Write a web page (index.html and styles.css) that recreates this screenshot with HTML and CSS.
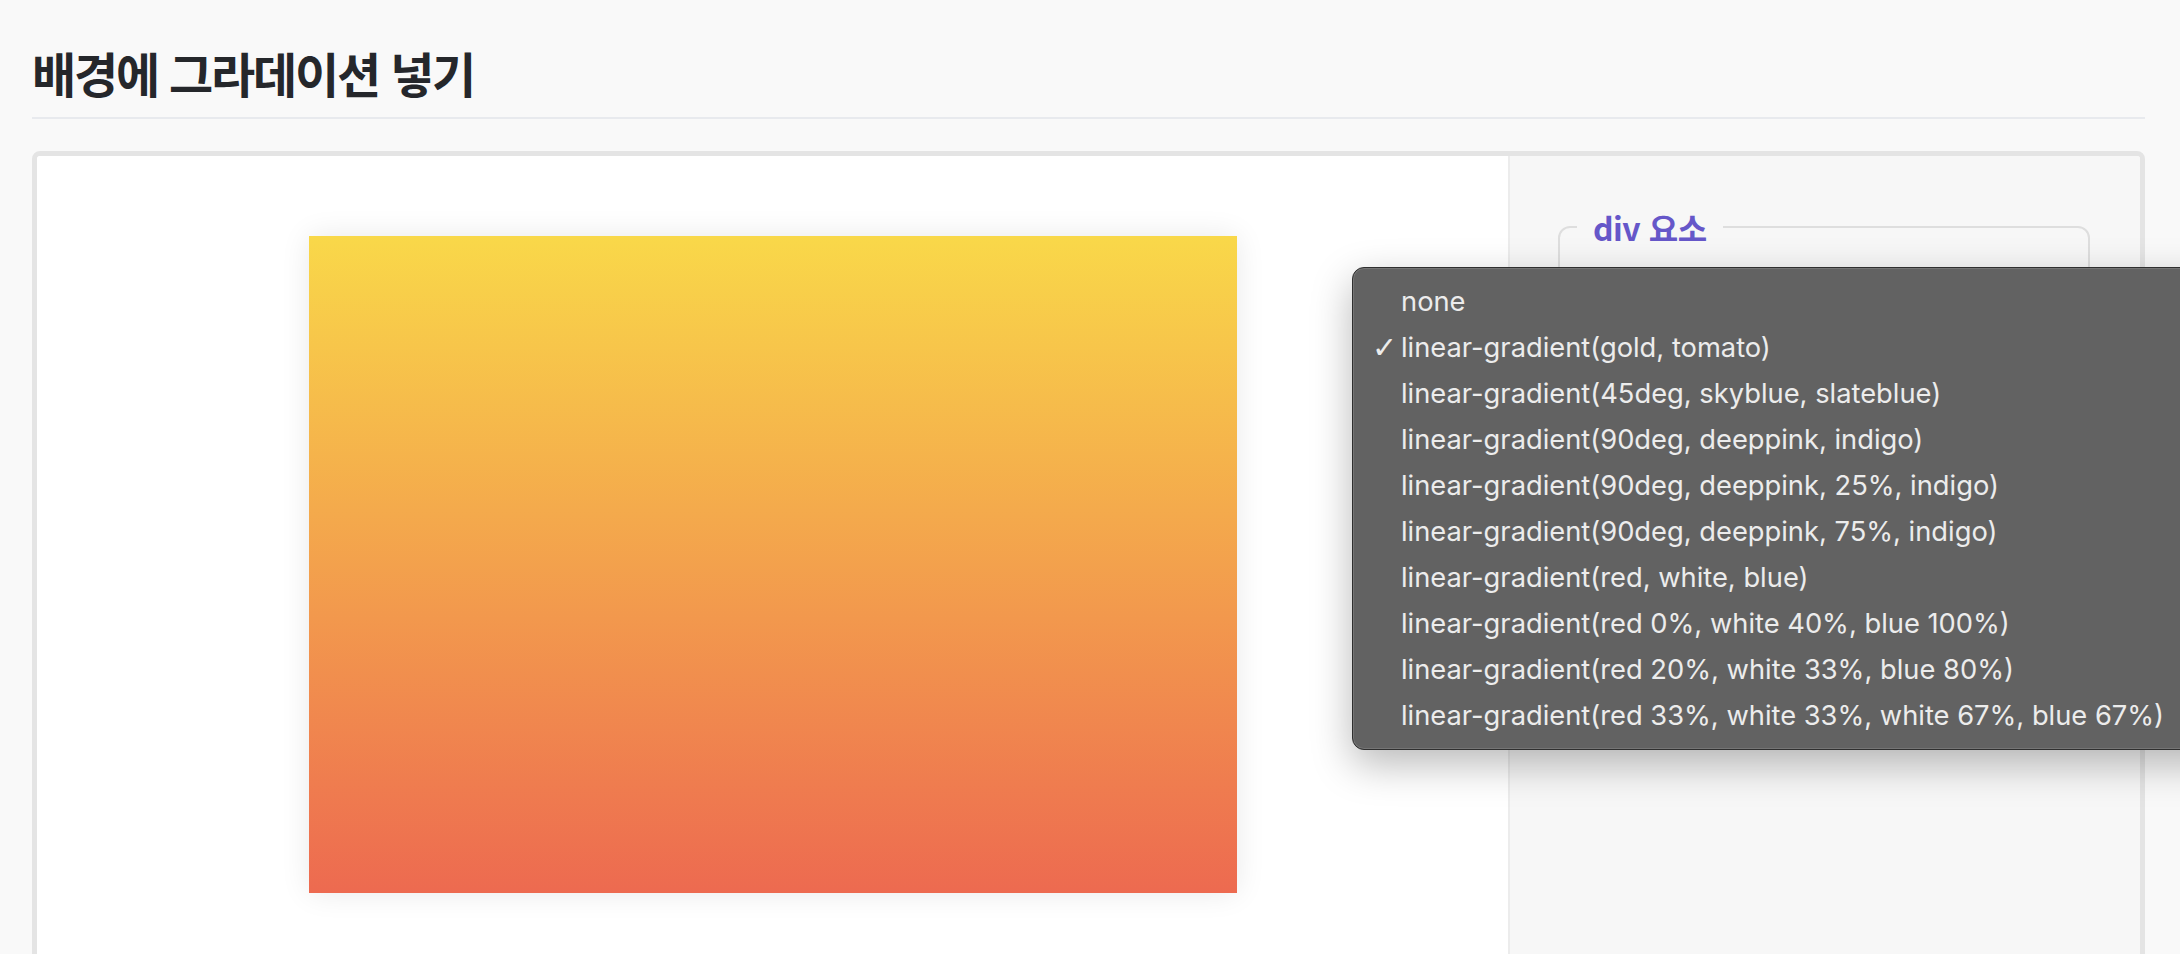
FILE: index.html
```html
<!DOCTYPE html>
<html lang="ko">
<head>
<meta charset="utf-8">
<title>배경에 그라데이션 넣기</title>
<link rel="stylesheet" href="styles.css">
</head>
<body>
<main class="page">
  <h1 class="title">배경에 그라데이션 넣기</h1>
  <section class="card">
    <div class="stage">
      <div class="box"></div>
    </div>
    <aside class="panel">
      <fieldset class="group">
        <legend class="group-legend">div 요소</legend>
        <div class="field">
          <label class="field-label">background-image</label>
          <select class="field-select">
            <option>linear-gradient(gold, tomato)</option>
          </select>
        </div>
      </fieldset>
    </aside>
  </section>
</main>
<ul class="menu">
  <li class="menu-item">none</li>
  <li class="menu-item is-checked">linear-gradient(gold, tomato)</li>
  <li class="menu-item">linear-gradient(45deg, skyblue, slateblue)</li>
  <li class="menu-item">linear-gradient(90deg, deeppink, indigo)</li>
  <li class="menu-item">linear-gradient(90deg, deeppink, 25%, indigo)</li>
  <li class="menu-item">linear-gradient(90deg, deeppink, 75%, indigo)</li>
  <li class="menu-item">linear-gradient(red, white, blue)</li>
  <li class="menu-item">linear-gradient(red 0%, white 40%, blue 100%)</li>
  <li class="menu-item">linear-gradient(red 20%, white 33%, blue 80%)</li>
  <li class="menu-item">linear-gradient(red 33%, white 33%, white 67%, blue 67%)</li>
</ul>
</body>
</html>
```
FILE: styles.css
```css
html, body {
  margin: 0;
  padding: 0;
  overflow: hidden;
  height: 954px;
}
body {
  background: #f9f9f9;
  font-family: "Noto Sans", "Noto Sans CJK KR", sans-serif;
  position: relative;
}
.page {
  padding: 0 35px 0 32px;
}
.title {
  margin: 0;
  padding: 40px 0 13px;
  font-family: "Noto Sans CJK KR", sans-serif;
  font-weight: 700;
  font-size: 48px;
  line-height: 64px;
  letter-spacing: -2.2px;
  color: #25272b;
  border-bottom: 2px solid #e8eaee;
}
.card {
  margin-top: 32px;
  height: 900px;
  border: 5px solid #e4e4e4;
  border-radius: 8px;
  display: grid;
  grid-template-columns: 1fr 632px;
  overflow: hidden;
}
.stage {
  background: #ffffff;
  padding-top: 80px;
  display: flex;
  justify-content: center;
  align-items: flex-start;
}
.box {
  width: 928px;
  height: 657px;
  background-image: linear-gradient(#f9d849, #ed6a50);
  box-shadow: 0 0 28px rgba(0, 0, 0, 0.09);
}
.panel {
  background: #f7f7f7;
  border-left: 2px solid #ececec;
  padding: 48px 50px 0 48px;
}
.group {
  margin: 0;
  border: 2px solid #dedede;
  border-radius: 12px;
  padding: 20px 24px 30px;
  height: 200px;
}
.group-legend {
  margin-left: -7px;
  padding: 0 16px;
  font-family: "Noto Sans CJK KR", sans-serif;
  font-weight: 700;
  font-size: 32px;
  letter-spacing: -0.5px;
  color: #6657c9;
}
.field-label {
  display: block;
  font-size: 18px;
  color: #444;
}
.field-select {
  margin-top: 8px;
  font-size: 18px;
}
.menu {
  position: absolute;
  left: 1352px;
  top: 267px;
  width: 900px;
  margin: 0;
  padding: 11px 0 10px;
  list-style: none;
  background: #626262;
  border: 1px solid #2f2f2f;
  border-radius: 12px;
  box-shadow: inset 0 0 0 1px rgba(255, 255, 255, 0.12), 0 14px 40px rgba(0, 0, 0, 0.28);
  font-family: Inter, "Noto Sans", sans-serif;
  font-size: 27.3px;
  color: #ececec;
}
.menu-item {
  position: relative;
  height: 46px;
  line-height: 46px;
  padding-left: 48px;
  white-space: nowrap;
}
.is-checked::before {
  content: "✓";
  position: absolute;
  left: 19px;
  top: 0;
  font-family: "DejaVu Sans", sans-serif;
  font-size: 30px;
}
```
